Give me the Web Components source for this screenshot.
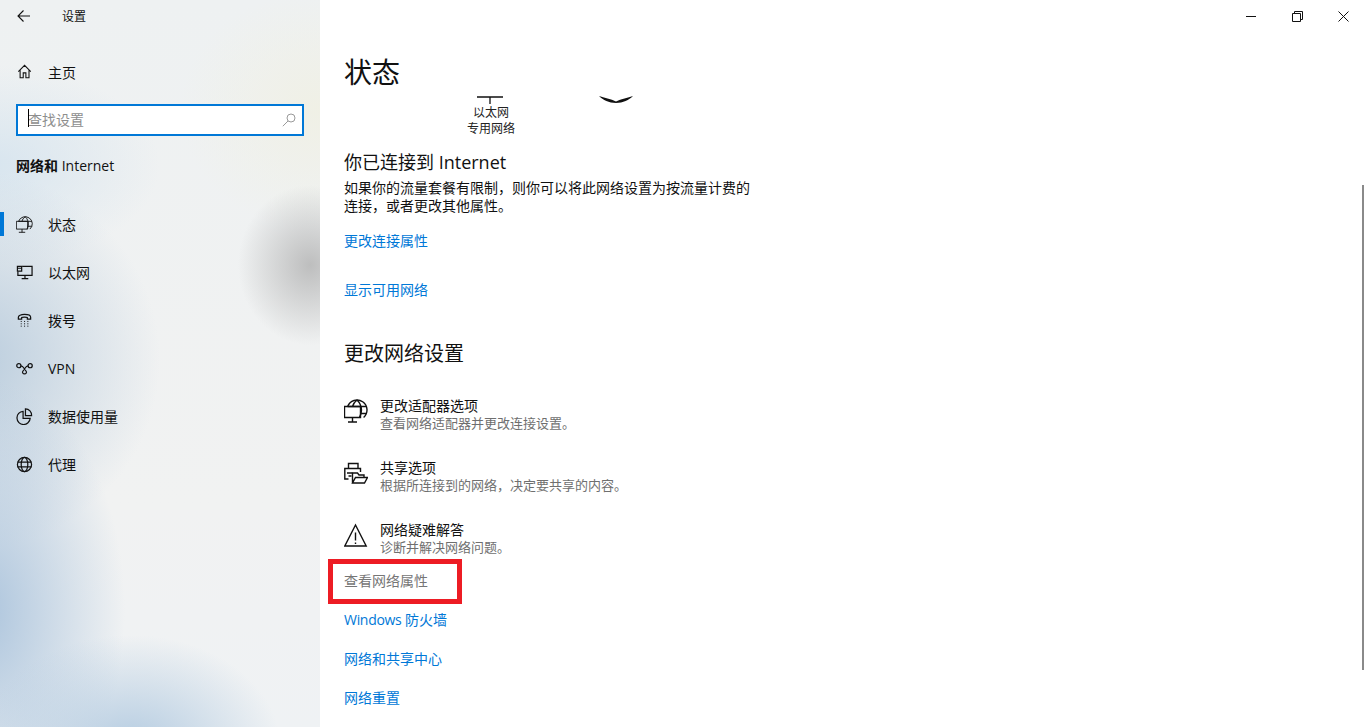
<!DOCTYPE html>
<html lang="zh-CN">
<head>
<meta charset="utf-8">
<title>设置</title>
<style>
  html, body { margin: 0; height: 100%; overflow: hidden; }
  body {
    font-family: "Open Sans", "Noto Sans CJK SC", sans-serif;
    color: #000;
  }
</style>
</head>
<body>
<settings-window>
  <settings-sidebar slot="side">
    <nav-item icon="status" active>状态</nav-item>
    <nav-item icon="ethernet">以太网</nav-item>
    <nav-item icon="dial">拨号</nav-item>
    <nav-item icon="vpn">VPN</nav-item>
    <nav-item icon="data">数据使用量</nav-item>
    <nav-item icon="proxy">代理</nav-item>
  </settings-sidebar>
  <settings-main slot="main">
    <section-head style="height:50px;font-size:18px">你已连接到 Internet</section-head>
    <p-text>如果你的流量套餐有限制，则你可以将此网络设置为按流量计费的<br>连接，或者更改其他属性。</p-text>
    <link-row style="margin-top:16px">更改连接属性</link-row>
    <link-row style="margin-top:29px">显示可用网络</link-row>
    <section-head style="margin-top:39px;height:58px">更改网络设置</section-head>
    <option-row icon="adapter" name="更改适配器选项" desc="查看网络适配器并更改连接设置。"></option-row>
    <option-row icon="share" name="共享选项" desc="根据所连接到的网络，决定要共享的内容。"></option-row>
    <option-row icon="warn" name="网络疑难解答" desc="诊断并解决网络问题。"></option-row>
    <link-row muted marked style="margin-top:-12px">查看网络属性</link-row>
    <link-row style="margin-top:19px"><span style="letter-spacing:-.3px">Windows</span> 防火墙</link-row>
    <link-row style="margin-top:19px">网络和共享中心</link-row>
    <link-row style="margin-top:19px">网络重置</link-row>
  </settings-main>
</settings-window>

<script>
// globe with a monitor in front, used in the sidebar and in the option list
const GLOBE_PC = '<path d="M3.630 7.500A10 10 0 1 1 19.610 18.500"/><path d="M13 1C10.500 3 9 5 8.500 7.500M13 1c3 3 4.500 6.500 4.500 10 0 3-1 5.500-2 7.500M3.630 7.500H22.400M16.500 14.500h5.900"/><path d="M.5 7.500h16v11H.5zM8.500 18.500v4.500M4 23h9"/>';

const ICONS = {
  status: `<g transform="scale(.75)">${GLOBE_PC}</g>`,
  ethernet: '<path d="M6.500 2.500H17v9.500H2V8"/><path d="M9.500 12v3.500M6 15.500h7"/><path d="M1.500 2.500h4.500v5H1.500zM1.500 4.500h4.500"/>',
  dial: '<path d="M2.500 7.500V5.500C2.500 4 5 2.500 9 2.500s6.500 1.500 6.500 3v2h-3.500V5.800C11 5.200 7 5.200 6 5.800v1.700z"/><path d="M5 10h1.100M8.500 10h1.100M12 10h1.100M5 12.500h1.100M8.500 12.500h1.100M12 12.500h1.100M5 15h1.100M8.500 15h1.100M12 15h1.100" stroke-width="1"/>',
  vpn: '<circle cx="3" cy="6" r="2.200"/><circle cx="15" cy="6" r="2.200"/><path d="M5.200 6.300C8 6.300 8 9 10.500 11.500 12 13 10.500 14.800 9 14.800S6 13 7.500 11.500C10 9 10 6.300 12.800 6.300"/>',
  data: '<path d="M7.500 3.500A7 7 0 1 0 15 11H7.500z"/><path d="M10 1a6.500 6.500 0 0 1 6.500 7H10z"/>',
  proxy: '<circle cx="9" cy="9" r="7.500"/><ellipse cx="9" cy="9" rx="3.500" ry="7.500"/><path d="M1.500 6.500h15M1.500 11.500h15"/>'
};

class SettingsWindow extends HTMLElement {
  constructor() {
    super();
    this.attachShadow({ mode: "open" }).innerHTML = `
      <style>
        :host { display: flex; width: 100%; height: 100vh; }
        .left { width: 320px; flex: none; }
        .right { flex: 1; min-width: 0; background: #fff; }
      </style>
      <div class="left"><slot name="side"></slot></div>
      <div class="right"><slot name="main"></slot></div>
    `;
  }
}

class SettingsSidebar extends HTMLElement {
  constructor() {
    super();
    this.attachShadow({ mode: "open" }).innerHTML = `
      <style>
        :host {
          display: block; height: 100vh; font-size: 14px; color: #111;
          background:
            radial-gradient(72px 80px at 310px 265px, rgba(170,170,170,.72), rgba(175,175,175,0)),
            radial-gradient(150px 110px at 130px 745px, rgba(178,202,224,.95), rgba(190,210,228,0)),
            radial-gradient(140px 230px at -15px 610px, rgba(170,195,220,.95), rgba(180,203,225,0)),
            radial-gradient(190px 190px at -30px 360px, rgba(182,202,220,.95), rgba(190,208,224,0)),
            radial-gradient(170px 100px at -10px 165px, rgba(210,226,238,.8), rgba(215,228,238,0)),
            radial-gradient(140px 120px at 320px 110px, rgba(240,240,228,.9), rgba(240,240,228,0)),
            linear-gradient(180deg, #eef1f2 0, #f1f2f2 70%, #eff2f4 100%);
        }
        .title { height: 32px; display: flex; align-items: center; padding-left: 16px; }
        .title svg { flex: none; }
        .title span { margin-left: 30px; font-size: 12px; }
        .home { height: 48px; margin-top: 16px; display: flex; align-items: center; padding-left: 17px; gap: 15px; }
        .search {
          box-sizing: border-box; height: 32px; margin: 8px 16px 0; width: 288px;
          border: 2px solid #0078d7; background: #fff; display: flex; align-items: center;
          padding: 0 6px 3px 10px; color: #8e8e8e; position: relative;
        }
        .search i { position: absolute; left: 10px; top: 3px; width: 1px; height: 18px; background: #000; }
        .search span { flex: 1; }
        .search svg { color: #9a9a9a; margin-top: 3px; }
        h2 { margin: 8px 0 0; font-size: 14px; font-weight: 600; padding-left: 16px; height: 42px; line-height: 44px; color: #111; }
        h2 span { font-weight: 400; }
        .list { margin-top: 14px; }
      </style>
      <div class="title">
        <svg width="16" height="16" viewBox="0 0 16 16" fill="none" stroke="#111" stroke-width="1.100"><path d="M14 8H2.500M7.500 2.500 2 8l5.500 5.500"/></svg>
        <span>设置</span>
      </div>
      <div class="home">
        <svg width="16" height="16" viewBox="0 0 18 18" fill="none" stroke="#111" stroke-width="1.200"><path d="M1.500 8.500 8.500 1.500l7 7M3.500 7v8.500h3.500V10h3v5.500h3.500V7"/></svg>
        <span>主页</span>
      </div>
      <div class="search"><i></i><span>查找设置</span>
        <svg width="14" height="14" viewBox="0 0 14 14" fill="none" stroke="currentColor"><circle cx="9" cy="5" r="4"/><path d="M6 8 .8 13.200"/></svg>
      </div>
      <h2>网络和 <span>Internet</span></h2>
      <div class="list"><slot></slot></div>
    `;
  }
}

class NavItem extends HTMLElement {
  constructor() {
    super();
    this.attachShadow({ mode: "open" }).innerHTML = `
      <style>
        :host { display: flex; align-items: center; height: 48px; padding-left: 16px; gap: 15px; position: relative; }
        :host([active])::before {
          content: ""; position: absolute; left: 0; top: 12px; width: 4px; height: 24px; background: #0078d7;
        }
        svg { flex: none; }
      </style>
      <svg width="17" height="17" viewBox="0 0 18 18" fill="none" stroke="#111" stroke-width="1.300">${ICONS[this.getAttribute("icon")]}</svg>
      <span><slot></slot></span>
    `;
  }
}

class SettingsMain extends HTMLElement {
  constructor() {
    super();
    this.attachShadow({ mode: "open" }).innerHTML = `
      <style>
        :host { display: block; height: 100vh; position: relative; overflow: hidden; font-size: 14px; }
        .bar { height: 32px; display: flex; justify-content: flex-end; color: #111; }
        .bar div { width: 46px; display: flex; align-items: center; justify-content: center; }
        .bar svg { display: block; }
        h1 { margin: 0; padding-left: 24px; height: 64px; font-size: 28px; font-weight: 400; line-height: 80px; color: #111; }
        .content { padding-left: 24px; }
        .state { display: flex; height: 51px; overflow: hidden; font-size: 12px; line-height: 16px; color: #222; }
        .net { width: 94px; margin-left: 100px; text-align: center; }
        .net svg { display: block; margin: 0 auto 1px; transform: translateX(-1px); }
        .wifi { margin-left: 60px; }
        .wifi svg { display: block; }
        .thumb { position: absolute; right: 2px; top: 185px; width: 2px; height: 485px; background: #8a8a8a; }
      </style>
      <div class="bar">
        <div><svg width="10" height="10" viewBox="0 0 10 10" stroke="currentColor" fill="none"><path d="M0 5.500h10"/></svg></div>
        <div><svg width="11" height="11" viewBox="0 0 11 11" stroke="currentColor" fill="none"><path d="M.5 2.500h8v8h-8zM2.500 2.500v-2h8v8h-2"/></svg></div>
        <div><svg width="11" height="11" viewBox="0 0 11 11" stroke="currentColor" fill="none"><path d="M.5.500l10 10M10.500.500l-10 10"/></svg></div>
      </div>
      <h1>状态</h1>
      <div class="content">
        <div class="state">
          <div class="net">
            <svg width="26" height="8" viewBox="0 0 26 8" fill="none" stroke="#111" stroke-width="1.300"><path d="M0 1h26M13 1v7"/></svg>
            以太网<br>专用网络
          </div>
          <div class="wifi">
            <svg width="36" height="8" viewBox="0 0 36 8"><path fill="#111" d="M1 0C6 2 13 3 18 5.500 23 3 30 2 35 0 31 4 25 7 18 7S5 4 1 0Z"/></svg>
          </div>
        </div>
        <slot></slot>
      </div>
      <div class="thumb"></div>
    `;
  }
}

class SectionHead extends HTMLElement {
  constructor() {
    super();
    this.attachShadow({ mode: "open" }).innerHTML = `
      <style>
        :host { display: block; font-size: 20px; line-height: 30px; color: #111; }
      </style>
      <slot></slot>
    `;
  }
}

class PText extends HTMLElement {
  constructor() {
    super();
    this.attachShadow({ mode: "open" }).innerHTML = `
      <style>
        :host { display: block; font-size: 14px; line-height: 18px; color: #111; margin-top: -18px; }
      </style>
      <slot></slot>
    `;
  }
}

class LinkRow extends HTMLElement {
  constructor() {
    super();
    this.attachShadow({ mode: "open" }).innerHTML = `
      <style>
        :host { display: block; font-size: 14px; line-height: 20px; color: #0078d7; position: relative; }
        :host([muted]) { color: #767676; }
        .mark {
          position: absolute; left: -16px; top: -12px; width: 134px; height: 45px;
          box-sizing: border-box; border: 5px solid #ed1c24;
        }
      </style>
      <slot></slot>
      ${this.hasAttribute("marked") ? '<div class="mark"></div>' : ""}
    `;
  }
}

const ROW_ICONS = {
  adapter: GLOBE_PC,
  share: '<path d="M4.500 8V2.500h9.500V8M4.500 18H.8V7.500h15.700V11M3 12h5.500M4.500 15h3"/><path d="M8.500 22V12h5l1.500 2h5v3M8.500 22l3-5.500h12L20.500 22z"/>',
  warn: '<path d="M11.500 2 .8 23h21.400z"/><path d="M11.500 9.500v8M11.500 19.500v1.500"/>'
};

class OptionRow extends HTMLElement {
  constructor() {
    super();
    const name = this.getAttribute("name");
    const desc = this.getAttribute("desc");
    const icon = this.getAttribute("icon");
    this.attachShadow({ mode: "open" }).innerHTML = `
      <style>
        :host { display: flex; height: 62px; align-items: flex-start; gap: 12px; font-size: 14px; line-height: 18px; }
        svg { flex: none; margin-top: 2px; }
        .name { color: #111; }
        .desc { color: #6f6f6f; font-size: 13px; margin-top: -1px; }
      </style>
      <svg width="24" height="24" viewBox="0 0 24 24" fill="none" stroke="#111" stroke-width="1.400">${ROW_ICONS[icon]}</svg>
      <div><div class="name">${name}</div><div class="desc">${desc}</div></div>
    `;
  }
}

customElements.define("settings-window", SettingsWindow);
customElements.define("settings-sidebar", SettingsSidebar);
customElements.define("nav-item", NavItem);
customElements.define("settings-main", SettingsMain);
customElements.define("section-head", SectionHead);
customElements.define("p-text", PText);
customElements.define("link-row", LinkRow);
customElements.define("option-row", OptionRow);
</script>
</body>
</html>
